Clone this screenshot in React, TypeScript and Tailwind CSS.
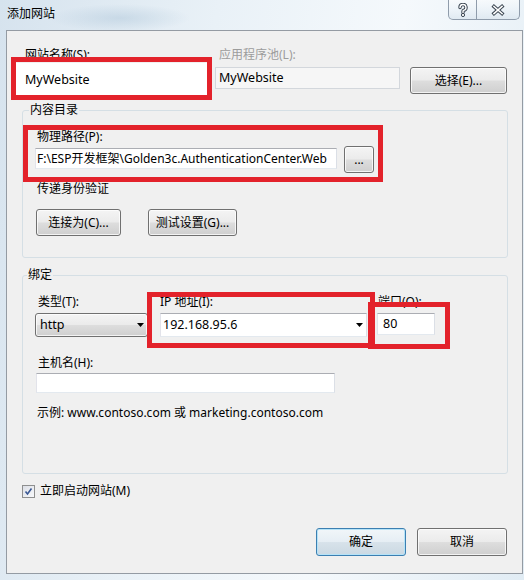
import React from 'react';

const btnLook =
  'rounded-[3px] border border-[#707070] bg-[linear-gradient(to_bottom,#f4f4f4,#ebebeb_48%,#dddddd_52%,#cfcfcf)] shadow-[inset_0_0_0_1px_rgba(255,255,255,0.75)] text-[12px] text-black';
const btn = `flex items-center justify-center ${btnLook}`;

const field = 'border border-[#abadb3] border-r-[#dbdfe6] border-b-[#e3e9ef] border-l-[#e2e3ea] bg-white';

function Arrow() {
  return (
    <svg width="7" height="4" viewBox="0 0 7 4">
      <polygon points="0,0 7,0 3.5,4" fill="#000" />
    </svg>
  );
}

function RedBox({ className }: { className: string }) {
  return <div className={`pointer-events-none absolute border-[5px] border-[#e3222b] ${className}`} />;
}

function CaptionButtons() {
  return (
    <div className="mr-[4px] flex">
      <div className="flex h-[20px] w-[29px] items-center justify-center rounded-bl-[5px] border border-t-0 border-[#8f9cab] bg-[linear-gradient(to_bottom,rgba(255,255,255,0.5),rgba(235,242,248,0.6)_50%,rgba(214,226,236,0.6))]">
        <svg width="12" height="14" viewBox="0 0 12 14">
          <g fill="none" strokeLinecap="round" strokeLinejoin="round">
            <path d="M3 4.5a3 3 0 1 1 3.6 2.9c-.5.2-.6.5-.6 1v1" stroke="#3b4652" strokeWidth="3.4" />
            <path d="M3 4.5a3 3 0 1 1 3.6 2.9c-.5.2-.6.5-.6 1v1" stroke="#fff" strokeWidth="1.4" />
          </g>
          <circle cx="6" cy="12" r="1.6" fill="#fff" stroke="#3b4652" strokeWidth="1" />
        </svg>
      </div>
      <div className="flex h-[20px] w-[43px] items-center justify-center rounded-br-[5px] border border-l-0 border-t-0 border-[#8f9cab] bg-[linear-gradient(to_bottom,rgba(255,255,255,0.5),rgba(235,242,248,0.6)_50%,rgba(214,226,236,0.6))]">
        <svg width="14" height="12" viewBox="0 0 14 12">
          <g strokeLinecap="square">
            <path d="M3 2.5l8 7M11 2.5l-8 7" stroke="#3b4652" strokeWidth="3.6" />
            <path d="M3 2.5l8 7M11 2.5l-8 7" stroke="#fff" strokeWidth="1.6" />
          </g>
        </svg>
      </div>
    </div>
  );
}

export default function App() {
  return (
    <div className="relative h-[580px] w-[524px] overflow-hidden bg-[radial-gradient(ellipse_70px_14px_at_120px_18px,rgba(170,195,215,0.45),transparent),linear-gradient(100deg,#d6e3ee_0%,#e9f1f7_35%,#f5f9fc_65%,#e1ecf4_100%)] font-['Noto_Sans','Noto_Sans_CJK_SC',sans-serif] text-[12px] leading-[16px] text-black">
      {/* title bar */}
      <div className="flex h-[30px] items-start justify-between">
        <div className="pl-[7px] pt-[6px]">添加网站</div>
        <CaptionButtons />
      </div>

      {/* client area */}
      <div className="ml-[6px] h-[544px] w-[517px] border border-[#949ba3] bg-[#f0f0f0] pt-[16px]">
        {/* site name / app pool */}
        <div className="flex items-start">
          <div className="ml-[9px] w-[191px]">
            <div className="h-[16px] pl-[9px]">网站名称(S):</div>
            <div className="flex h-[33px] items-center bg-white pl-[9px] text-[12.5px]">MyWebsite</div>
          </div>
          <div className="ml-[8px] w-[185px]">
            <div className="h-[16px] pl-[4px] text-[#9c9c9c]">应用程序池(L):</div>
            <div className="mt-[4px] flex h-[22px] items-center border border-[#d3d7dc] bg-[#f6f6f6] pl-[3px] text-[12.5px]">
              MyWebsite
            </div>
          </div>
          <div className={`ml-[10px] mt-[20px] h-[27px] w-[97px] ${btn}`}>选择(E)...</div>
        </div>

        {/* content directory */}
        <fieldset className="ml-[15px] mt-[6px] w-[486px] rounded-[3px] border border-[#d5dfe5] pb-[21px]">
          <legend className="ml-[6px] px-[1px] leading-[16px]">内容目录</legend>
          <div className="pl-[12px]">
            <div className="mt-[11px] pl-[2px]">物理路径(P):</div>
            <div className="mt-[1px] flex items-start">
              <div className={`mt-[2px] flex h-[21px] w-[302px] items-center overflow-hidden whitespace-nowrap pl-[1px] ${field}`}>
                F:\ESP开发框架\Golden3c.AuthenticationCenter.Web
              </div>
              <div className={`ml-[7px] h-[27px] w-[30px] ${btn}`}>...</div>
            </div>
            <div className="mt-[8px] pl-[2px]">传递身份验证</div>
            <div className="mt-[12px] flex">
              <div className={`ml-[1px] h-[27px] w-[85px] ${btn}`}>连接为(C)...</div>
              <div className={`ml-[27px] h-[27px] w-[89px] ${btn}`}>测试设置(G)...</div>
            </div>
          </div>
        </fieldset>

        {/* binding */}
        <fieldset className="ml-[15px] mt-[9px] w-[486px] rounded-[3px] border border-[#d5dfe5] pb-[52px]">
          <legend className="ml-[4px] px-[1px] leading-[16px]">绑定</legend>
          <div className="pl-[12px]">
            <div className="mt-[11px] flex items-start">
              <div className="w-[113px]">
                <div className="pl-[3px]">类型(T):</div>
                <div className={`mt-[3px] flex h-[24px] items-center justify-between pl-[4px] pr-[3px] ${btnLook}`}>
                  <span className="text-[12.5px]">http</span>
                  <Arrow />
                </div>
              </div>
              <div className="ml-[12px] w-[207px]">
                <div>IP 地址(I):</div>
                <div className={`mt-[3px] flex h-[24px] items-center justify-between pl-[2px] pr-[3px] text-[12.5px] ${field}`}>
                  <span>192.168.95.6</span>
                  <Arrow />
                </div>
              </div>
              <div className="ml-[10px] w-[58px]">
                <div className="pl-[1px]">端口(O):</div>
                <div className={`mt-[3px] flex h-[22px] items-center pl-[5px] text-[12.5px] ${field}`}>80</div>
              </div>
            </div>
            <div className="mt-[18px] pl-[3px]">主机名(H):</div>
            <div className={`ml-[1px] mt-[2px] h-[20px] w-[299px] ${field}`} />
            <div className="mt-[12px] pl-[2px]">示例: www.contoso.com 或 marketing.contoso.com</div>
          </div>
        </fieldset>

        {/* start immediately */}
        <div className="ml-[15px] mt-[9px] flex items-center">
          <div className="flex h-[13px] w-[13px] items-center justify-center border border-[#8e8f8f] bg-[linear-gradient(135deg,#dcdfe6,#f8f9fb)]">
            <svg width="9" height="9" viewBox="0 0 9 9">
              <path d="M1.5 4.5l2 2.5 4-5.5" fill="none" stroke="#3a5894" strokeWidth="1.6" />
            </svg>
          </div>
          <div className="ml-[5px] h-[16px]">立即启动网站(M)</div>
        </div>

        {/* dialog buttons */}
        <div className="mt-[29px] flex justify-end gap-[11px] pr-[15px]">
          <div className="flex h-[28px] w-[90px] items-center justify-center rounded-[3px] border border-[#3c7fb1] bg-[linear-gradient(to_bottom,#f1f6f9,#e6eef4_48%,#d7e2ea_52%,#cbd9e3)] shadow-[inset_0_0_0_1px_#b5e3f8]">
            确定
          </div>
          <div className={`h-[28px] w-[90px] ${btn}`}>取消</div>
        </div>
      </div>

      {/* annotation boxes */}
      <RedBox className="left-[11px] top-[57px] h-[43px] w-[201px]" />
      <RedBox className="left-[23px] top-[125px] h-[57px] w-[360px]" />
      <RedBox className="left-[147px] top-[292px] h-[56px] w-[228px]" />
      <RedBox className="left-[368px] top-[302px] h-[47px] w-[82px]" />
    </div>
  );
}
